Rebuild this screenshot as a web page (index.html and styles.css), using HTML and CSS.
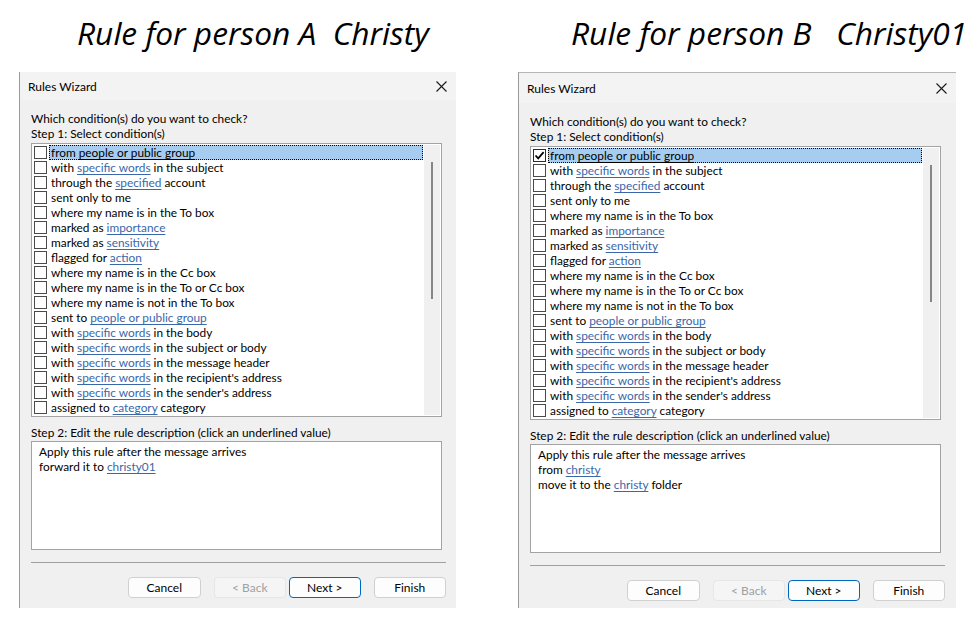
FILE: index.html
```html
<!DOCTYPE html>
<html>
<head>
<meta charset="utf-8">
<link rel="stylesheet" href="styles.css">
</head>
<body>
<div class="page">
  <section class="panel panel-a">
    <h1 class="heading">Rule for person A  Christy</h1>
    <div class="dialog">
      <div class="titlebar">
        <span class="title">Rules Wizard</span>
        <svg class="close" width="11" height="11" viewBox="0 0 11 11"><path d="M0.5 0.5 L10.5 10.5 M10.5 0.5 L0.5 10.5" stroke="#1a1a1a" stroke-width="1.1" fill="none"/></svg>
      </div>
      <div class="body">
        <p class="label q">Which condition(s) do you want to check?</p>
        <p class="label">Step 1: Select condition(s)</p>
        <div class="list">
          <ul class="rows">
            <li class="row sel"><span class="cb"></span><span class="txt">from <u class="lk">people or public group</u></span></li>
            <li class="row"><span class="cb"></span><span class="txt">with <u class="lk">specific words</u> in the subject</span></li>
            <li class="row"><span class="cb"></span><span class="txt">through the <u class="lk">specified</u> account</span></li>
            <li class="row"><span class="cb"></span><span class="txt">sent only to me</span></li>
            <li class="row"><span class="cb"></span><span class="txt">where my name is in the To box</span></li>
            <li class="row"><span class="cb"></span><span class="txt">marked as <u class="lk">importance</u></span></li>
            <li class="row"><span class="cb"></span><span class="txt">marked as <u class="lk">sensitivity</u></span></li>
            <li class="row"><span class="cb"></span><span class="txt">flagged for <u class="lk">action</u></span></li>
            <li class="row"><span class="cb"></span><span class="txt">where my name is in the Cc box</span></li>
            <li class="row"><span class="cb"></span><span class="txt">where my name is in the To or Cc box</span></li>
            <li class="row"><span class="cb"></span><span class="txt">where my name is not in the To box</span></li>
            <li class="row"><span class="cb"></span><span class="txt">sent to <u class="lk">people or public group</u></span></li>
            <li class="row"><span class="cb"></span><span class="txt">with <u class="lk">specific words</u> in the body</span></li>
            <li class="row"><span class="cb"></span><span class="txt">with <u class="lk">specific words</u> in the subject or body</span></li>
            <li class="row"><span class="cb"></span><span class="txt">with <u class="lk">specific words</u> in the message header</span></li>
            <li class="row"><span class="cb"></span><span class="txt">with <u class="lk">specific words</u> in the recipient's address</span></li>
            <li class="row"><span class="cb"></span><span class="txt">with <u class="lk">specific words</u> in the sender's address</span></li>
            <li class="row"><span class="cb"></span><span class="txt">assigned to <u class="lk">category</u> category</span></li>
          </ul>
          <div class="scroll"><div class="thumb"></div></div>
        </div>
        <p class="label step2">Step 2: Edit the rule description (click an underlined value)</p>
        <div class="desc">
          <p>Apply this rule after the message arrives</p>
          <p>forward it to <u class="lk">christy01</u></p>
        </div>
        <div class="sep"></div>
        <div class="buttons">
          <button class="btn">Cancel</button>
          <button class="btn back">&lt; Back</button>
          <button class="btn next">Next &gt;</button>
          <button class="btn finish">Finish</button>
        </div>
      </div>
    </div>
  </section>

  <section class="panel panel-b">
    <h1 class="heading">Rule for person B   Christy01</h1>
    <div class="dialog">
      <div class="titlebar">
        <span class="title">Rules Wizard</span>
        <svg class="close" width="11" height="11" viewBox="0 0 11 11"><path d="M0.5 0.5 L10.5 10.5 M10.5 0.5 L0.5 10.5" stroke="#1a1a1a" stroke-width="1.1" fill="none"/></svg>
      </div>
      <div class="body">
        <p class="label q">Which condition(s) do you want to check?</p>
        <p class="label">Step 1: Select condition(s)</p>
        <div class="list">
          <ul class="rows">
            <li class="row sel"><span class="cb checked"><svg width="11" height="11" viewBox="0 0 11 11"><path d="M1.5 5.5 L4.2 8.3 L9.6 2.2" stroke="#000" stroke-width="1.8" fill="none"/></svg></span><span class="txt">from <u class="lk">people or public group</u></span></li>
            <li class="row"><span class="cb"></span><span class="txt">with <u class="lk">specific words</u> in the subject</span></li>
            <li class="row"><span class="cb"></span><span class="txt">through the <u class="lk">specified</u> account</span></li>
            <li class="row"><span class="cb"></span><span class="txt">sent only to me</span></li>
            <li class="row"><span class="cb"></span><span class="txt">where my name is in the To box</span></li>
            <li class="row"><span class="cb"></span><span class="txt">marked as <u class="lk">importance</u></span></li>
            <li class="row"><span class="cb"></span><span class="txt">marked as <u class="lk">sensitivity</u></span></li>
            <li class="row"><span class="cb"></span><span class="txt">flagged for <u class="lk">action</u></span></li>
            <li class="row"><span class="cb"></span><span class="txt">where my name is in the Cc box</span></li>
            <li class="row"><span class="cb"></span><span class="txt">where my name is in the To or Cc box</span></li>
            <li class="row"><span class="cb"></span><span class="txt">where my name is not in the To box</span></li>
            <li class="row"><span class="cb"></span><span class="txt">sent to <u class="lk">people or public group</u></span></li>
            <li class="row"><span class="cb"></span><span class="txt">with <u class="lk">specific words</u> in the body</span></li>
            <li class="row"><span class="cb"></span><span class="txt">with <u class="lk">specific words</u> in the subject or body</span></li>
            <li class="row"><span class="cb"></span><span class="txt">with <u class="lk">specific words</u> in the message header</span></li>
            <li class="row"><span class="cb"></span><span class="txt">with <u class="lk">specific words</u> in the recipient's address</span></li>
            <li class="row"><span class="cb"></span><span class="txt">with <u class="lk">specific words</u> in the sender's address</span></li>
            <li class="row"><span class="cb"></span><span class="txt">assigned to <u class="lk">category</u> category</span></li>
          </ul>
          <div class="scroll"><div class="thumb"></div></div>
        </div>
        <p class="label step2">Step 2: Edit the rule description (click an underlined value)</p>
        <div class="desc">
          <p>Apply this rule after the message arrives</p>
          <p>from <u class="lk">christy</u></p>
          <p>move it to the <u class="lk">christy</u> folder</p>
        </div>
        <div class="sep"></div>
        <div class="buttons">
          <button class="btn">Cancel</button>
          <button class="btn back">&lt; Back</button>
          <button class="btn next">Next &gt;</button>
          <button class="btn finish">Finish</button>
        </div>
      </div>
    </div>
  </section>
</div>
</body>
</html>
```

FILE: styles.css
```css
* { box-sizing: border-box; margin: 0; padding: 0; }
html, body { background: #ffffff; }
body {
  width: 979px;
  height: 629px;
  overflow: hidden;
  font-family: "Lato", "Open Sans", sans-serif;
  color: #000;
}
.page { display: flex; }
.panel { flex: none; }
.panel-a { width: 499px; }
.panel-b { width: 480px; }

.heading {
  height: 72px;
  line-height: 66px;
  font-family: "Open Sans", "Noto Sans", sans-serif;
  font-size: 31.7px;
  font-style: italic;
  font-weight: 400;
  white-space: pre;
  color: #000;
}
.panel-a .heading { padding-left: 77px; }
.panel-b .heading { padding-left: 72px; }

.dialog {
  margin-left: 19px;
  width: 437px;
  height: 536px;
  background: #f0f0f0;
  border-left: 1px solid #9a9a9a;
  overflow: hidden;
  display: flex;
  flex-direction: column;
}
.panel-b .dialog {
  width: 438px;
  border-top: 1px solid #b5b5b5;
}

.titlebar {
  flex: none;
  height: 28px;
  background: #f3f3f3;
  display: flex;
  align-items: center;
  justify-content: space-between;
  padding: 0 9px 0 8px;
  font-size: 12px;
}
.panel-b .titlebar { height: 30px; }
.title { color: #000; }
.close { display: block; }

.body {
  padding: 11px 10px 0 11px;
  font-size: 11.85px;
  line-height: 15px;
}
.label { height: 15px; white-space: nowrap; }

.list {
  margin-top: 2px;
  width: 411px;
  height: 274px;
  border: 1px solid #a3a3a3;
  background: #fff;
  display: flex;
  padding: 1px 1px 1px 0;
}
.rows {
  list-style: none;
  flex: 1;
}
.row {
  height: 15px;
  display: flex;
  align-items: center;
  white-space: nowrap;
}
.cb {
  flex: none;
  width: 13px;
  height: 13px;
  margin-left: 2px;
  margin-right: 2px;
  border: 1px solid #4a4a4a;
  background: #fff;
  display: flex;
  align-items: center;
  justify-content: center;
}
.cb.checked { border-color: #2b2b2b; }
.cb svg { display: block; }
.txt {
  flex: 1;
  height: 15px;
  padding-left: 2px;
  line-height: 15px;
}
.row.sel .txt {
  background: #a6cdf0;
  outline: 1px dotted #000;
  outline-offset: -1px;
}
.lk {
  color: #3a67aa;
  text-decoration: underline;
  text-underline-offset: 2px;
  text-decoration-thickness: 1px;
}
.row.sel .lk { color: #000; }

.scroll {
  flex: none;
  width: 16px;
  margin-left: 1px;
  background: #f0f0f0;
  position: relative;
}
.thumb {
  position: absolute;
  left: 7px;
  top: 17px;
  width: 2px;
  height: 137px;
  background: #868686;
}

.step2 { margin-top: 8px; }

.desc {
  margin-top: 1px;
  width: 411px;
  height: 109px;
  border: 1px solid #a3a3a3;
  background: #fff;
  padding: 2px 7px;
}
.desc p { height: 15px; white-space: nowrap; }

.sep {
  margin-top: 12px;
  width: 415px;
  height: 1px;
  background: #a0a0a0;
}

.buttons {
  margin-top: 14px;
  width: 415px;
  display: flex;
  justify-content: flex-end;
}
.btn {
  width: 72.5px;
  height: 21px;
  border: 1px solid #d0d0d0;
  border-radius: 4px;
  background: #fdfdfd;
  font-family: "Lato", "Open Sans", sans-serif;
  font-size: 12px;
  color: #000;
}
.btn.back {
  margin-left: 13px;
  background: #f5f5f5;
  border-color: #e6e6e6;
  color: #a0a0a0;
}
.btn.next {
  margin-left: 2.5px;
  border-color: #0067c0;
}
.btn.finish { margin-left: 12.5px; }
```
